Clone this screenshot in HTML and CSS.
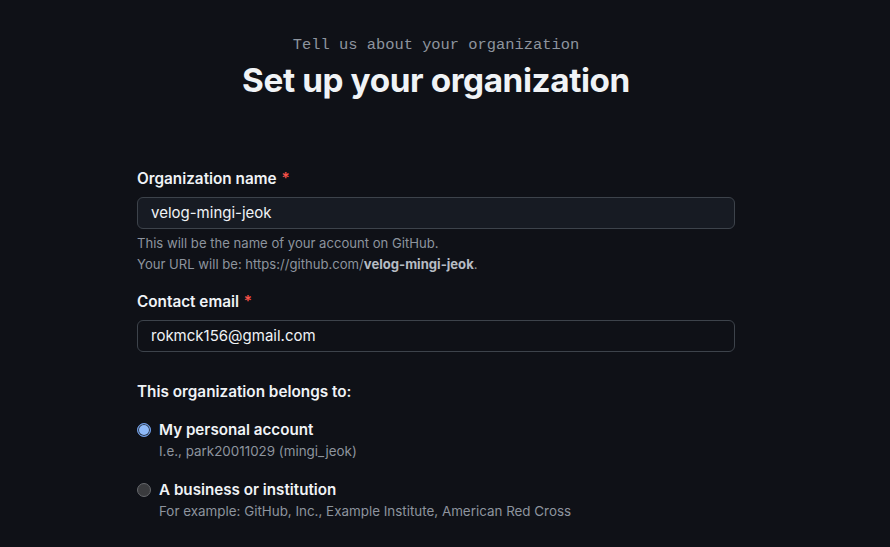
FILE: index.html
```html
<!DOCTYPE html>
<html lang="en">
<head>
<meta charset="utf-8">
<title>Set up your organization</title>
<link rel="stylesheet" href="styles.css">
</head>
<body>
<main class="page">
  <header class="hero">
    <p class="eyebrow">Tell us about your organization</p>
    <h1 class="title">Set up your organization</h1>
  </header>
  <form class="form">
    <div class="field">
      <label class="label">Organization name <span class="req">*</span></label>
      <div class="input input-filled">velog-mingi-jeok</div>
      <p class="note">This will be the name of your account on GitHub.<br>Your URL will be: https://github.com/<strong>velog-mingi-jeok</strong>.</p>
    </div>
    <div class="field">
      <label class="label">Contact email <span class="req">*</span></label>
      <div class="input">rokmck156@gmail.com</div>
    </div>
    <div class="group">
      <p class="label">This organization belongs to:</p>
      <div class="option">
        <span class="radio radio-on"></span>
        <div class="option-text">
          <span class="option-title">My personal account</span>
          <span class="option-note">I.e., park20011029 (mingi_jeok)</span>
        </div>
      </div>
      <div class="option">
        <span class="radio"></span>
        <div class="option-text">
          <span class="option-title">A business or institution</span>
          <span class="option-note">For example: GitHub, Inc., Example Institute, American Red Cross</span>
        </div>
      </div>
    </div>
  </form>
</main>
</body>
</html>
```

FILE: styles.css
```css
* { box-sizing: border-box; }
html, body { margin: 0; padding: 0; }
body {
  background: #0f1117;
  color: #e6edf3;
  font-family: Inter, "Noto Sans", sans-serif;
  height: 547px;
  overflow: hidden;
}
.page {
  width: 872px;
  display: flex;
  flex-direction: column;
  align-items: center;
}
.hero {
  text-align: center;
  padding-top: 35px;
}
.eyebrow {
  margin: 0;
  font-family: "Liberation Mono", "DejaVu Sans Mono", monospace;
  font-size: 15.4px;
  line-height: 20px;
  color: #8d949e;
}
.title {
  margin: 3px 0 0;
  font-size: 33.3px;
  line-height: 44px;
  font-weight: 700;
  letter-spacing: -0.4px;
  color: #f0f3f6;
}
.form {
  width: 598px;
  margin-top: 67px;
  display: flex;
  flex-direction: column;
}
.field { margin-bottom: 17px; }
.label {
  display: block;
  margin: 0 0 8px;
  font-size: 15.3px;
  line-height: 20px;
  font-weight: 600;
  color: #f0f3f6;
}
.req { color: #f85149; margin-left: 1px; }
.input {
  height: 32px;
  border: 1px solid #3d434b;
  border-radius: 6px;
  padding: 0 13px;
  font-size: 15px;
  line-height: 30px;
  color: #f0f3f6;
  background: #0f1117;
}
.input-filled { background: #171b23; }
.note {
  margin: 4px 0 0;
  font-size: 13.1px;
  line-height: 21px;
  color: #8d949e;
}
.note strong { color: #b6bcc4; font-weight: 700; }
.group { margin-top: 13px; }
.group .label { margin-bottom: 18px; }
.option {
  display: flex;
  align-items: flex-start;
  gap: 8px;
  margin-bottom: 18px;
}
.radio {
  width: 14px;
  height: 14px;
  margin-top: 3px;
  border-radius: 50%;
  background: #3a3b3e;
  border: 1px solid #66686c;
  flex: none;
}
.radio-on {
  background: #8fbaf8;
  border: 1.5px solid #6d9be6;
  box-shadow: inset 0 0 0 1px #2a3546;
}
.option-text { display: flex; flex-direction: column; }
.option-title {
  font-size: 15.2px;
  line-height: 20px;
  font-weight: 600;
  color: #f0f3f6;
}
.option-note {
  font-size: 13.4px;
  line-height: 22px;
  color: #8d949e;
}
```
